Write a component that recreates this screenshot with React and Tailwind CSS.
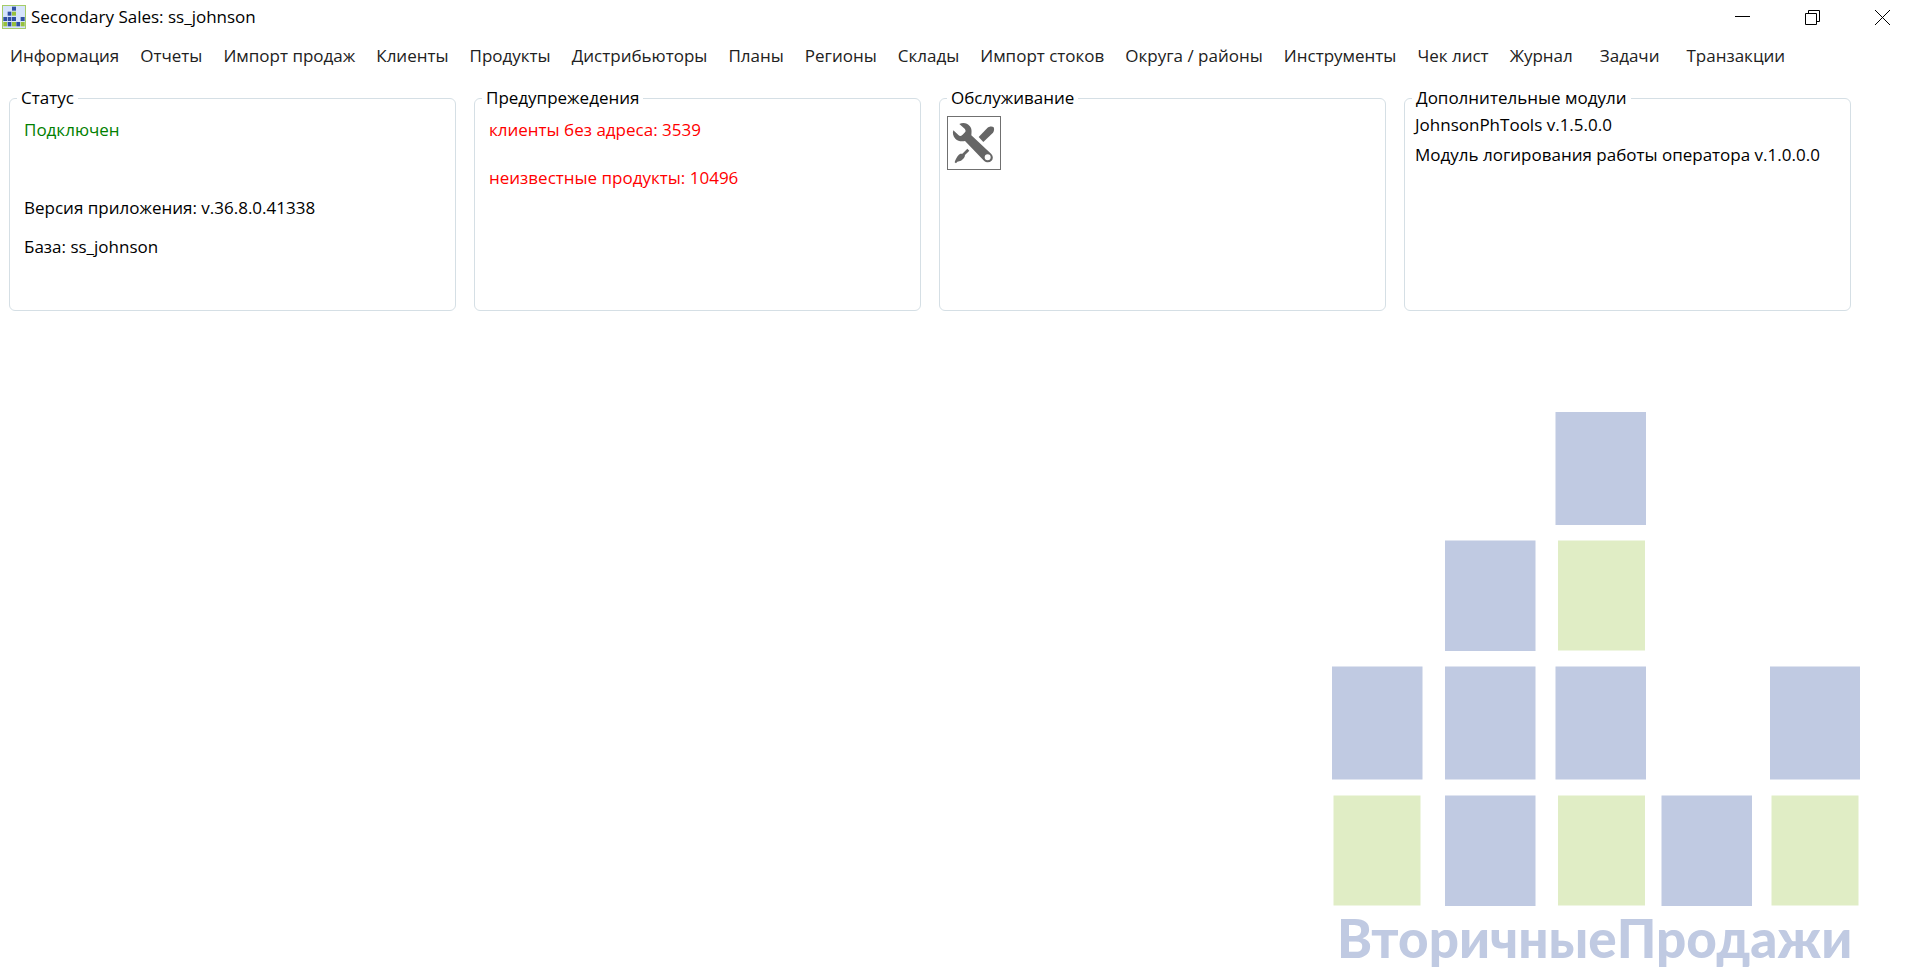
const MENU = [
  'Информация',
  'Отчеты',
  'Импорт продаж',
  'Клиенты',
  'Продукты',
  'Дистрибьюторы',
  'Планы',
  'Регионы',
  'Склады',
  'Импорт стоков',
  'Округа / районы',
  'Инструменты',
  'Чек лист',
  'Журнал',
];

const SERVICE_MENU = ['Задачи', 'Транзакции'];

function AppIcon() {
  return (
    <svg className="size-6" viewBox="0 0 72 72" aria-hidden="true">
      <rect x="1.5" y="1.5" width="69" height="69" fill="#d5e3fc" stroke="#a6cc68" strokeWidth="3" />
      <g fill="#2f50a2">
        <rect x="30" y="5" width="12" height="12" />
        <rect x="17" y="20" width="11" height="12" />
        <rect x="4" y="36" width="11" height="12" />
        <rect x="17" y="36" width="11" height="12" />
        <rect x="30" y="36" width="12" height="12" />
        <rect x="56" y="36" width="12" height="12" />
        <rect x="17" y="51" width="11" height="13" />
        <rect x="43" y="51" width="11" height="13" />
      </g>
      <g fill="#97c13c">
        <rect x="30" y="20" width="12" height="12" />
        <rect x="4" y="51" width="11" height="13" />
        <rect x="30" y="51" width="12" height="13" />
        <rect x="56" y="51" width="12" height="13" />
      </g>
    </svg>
  );
}

function ToolsIcon() {
  return (
    <svg className="size-full" viewBox="3 3 156 156" fill="#666666" aria-hidden="true">
      <path
        fillRule="evenodd"
        d="M37 24 C48 18 61 21 68 30 C75 38 74 46 73 58 L133 114 C139 121 139 129 133 135 C127 140 118 140 111 134 L54 75 C43 77 33 76 25 68 C18 61 16 51 19 43 L35 58 C38 61 42 61 46 57 L54 49 C57 46 56 42 53 38 Z M122 115 A9 9 0 1 0 122 133 A9 9 0 1 0 122 115 Z"
      />
      <path d="M95 63 L121 36 C126 31 136 30 140 34 C142 38 142 45 138 50 L109 78 Z" />
      <path d="M61 98 L67 104 L54 117 C54 124 48 130 42 134 L31 137 L27 142 L23 139 L25 133 C29 124 34 116 40 113 L46 113 Z" />
    </svg>
  );
}

function Watermark() {
  return (
    <svg className="h-[566px] w-[528px]" viewBox="0 0 528 566" role="img" aria-label="ВторичныеПродажи">
      <g fill="#c0cae2">
        <rect x="223.5" y="1" width="90.5" height="113" />
        <rect x="113" y="129.5" width="90.5" height="110.5" />
        <rect x="0" y="255.5" width="90.5" height="113" />
        <rect x="113" y="255.5" width="90.5" height="113" />
        <rect x="223.5" y="255.5" width="90.5" height="113" />
        <rect x="438" y="255.5" width="90" height="113" />
        <rect x="113" y="384.5" width="90.5" height="110.5" />
        <rect x="329.5" y="384.5" width="90.5" height="110.5" />
      </g>
      <g fill="#e0edc5">
        <rect x="226" y="129.5" width="87" height="110" />
        <rect x="1.5" y="384.5" width="87" height="110" />
        <rect x="226" y="384.5" width="87" height="110" />
        <rect x="439.5" y="384.5" width="87" height="110" />
      </g>
      <text x="5" y="547" fill="#c0cae2" className="font-['Lato',sans-serif] text-[53px] font-black">
        ВторичныеПродажи
      </text>
    </svg>
  );
}

function Panel({ title, children }) {
  return (
    <fieldset className="h-[225px] min-w-0 rounded-md border border-[#d5dfe5] px-[7px]">
      <legend className="px-1 text-black">{title}</legend>
      {children}
    </fieldset>
  );
}

export default function App() {
  return (
    <div className="flex min-h-screen flex-col bg-white font-['Open_Sans','Noto_Sans',sans-serif] text-[17px] leading-6 text-black">
      <header className="flex h-[34px] items-center justify-between pl-0.5">
        <h1 className="flex items-center gap-[5px]">
          <AppIcon />
          Secondary Sales: ss_johnson
        </h1>
        <div className="flex h-full gap-1">
          <button type="button" aria-label="Свернуть" className="flex w-[66px] items-center justify-center">
            <svg width="15" height="15" viewBox="0 0 15 15" aria-hidden="true">
              <path d="M0 6.5H15" stroke="#000" />
            </svg>
          </button>
          <button type="button" aria-label="Восстановить" className="flex w-[66px] items-center justify-center">
            <svg width="15" height="15" viewBox="0 0 15 15" fill="none" stroke="#000" aria-hidden="true">
              <path d="M0.5 3.5H11.5V14.5H0.5Z M3.5 3.5V0.5H14.5V11.5H11.5" />
            </svg>
          </button>
          <button type="button" aria-label="Закрыть" className="flex w-[66px] items-center justify-center">
            <svg width="15" height="15" viewBox="0 0 15 15" stroke="#000" aria-hidden="true">
              <path d="M0 0L15 15M15 0L0 15" />
            </svg>
          </button>
        </div>
      </header>

      <nav className="flex h-11 items-center gap-[21px] pl-2.5 text-[#212121]">
        {MENU.map((item) => (
          <button key={item} type="button" className="whitespace-nowrap">
            {item}
          </button>
        ))}
        {SERVICE_MENU.map((item) => (
          <button key={item} type="button" className="pl-1.5 whitespace-nowrap">
            {item}
          </button>
        ))}
      </nav>

      <main className="flex grow flex-col">
        <div className="grid grid-cols-4 gap-[18px] pt-2 pr-16 pl-[9px]">
          <Panel title="Статус">
            <div className="px-[7px] pt-2">
              <p className="text-[#008000]">Подключен</p>
              <p className="pt-[54px]">Версия приложения: v.36.8.0.41338</p>
              <p className="pt-[15px]">База: ss_johnson</p>
            </div>
          </Panel>
          <Panel title="Предупрежедения">
            <div className="flex flex-col gap-6 px-[7px] pt-2 text-[#ff0000]">
              <p>клиенты без адреса: 3539</p>
              <p>неизвестные продукты: 10496</p>
            </div>
          </Panel>
          <Panel title="Обслуживание">
            <button type="button" aria-label="Обслуживание" className="mt-1.5 block size-[54px] border border-[#707070]">
              <ToolsIcon />
            </button>
          </Panel>
          <Panel title="Дополнительные модули">
            <ul className="flex flex-col gap-1.5 px-[3px] pt-[3px]">
              <li>JohnsonPhTools v.1.5.0.0</li>
              <li>Модуль логирования работы оператора v.1.0.0.0</li>
            </ul>
          </Panel>
        </div>
        <div className="mt-auto flex justify-end pr-[55px]">
          <Watermark />
        </div>
      </main>
    </div>
  );
}
